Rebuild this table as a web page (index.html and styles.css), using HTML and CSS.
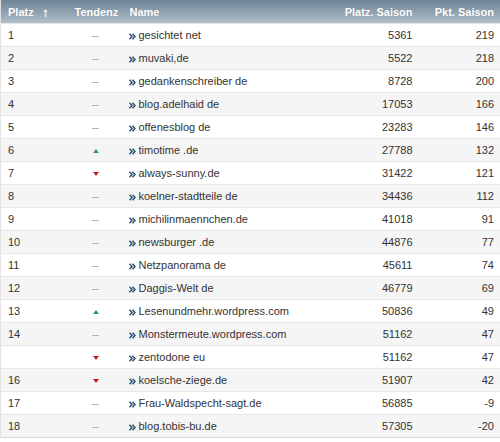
FILE: index.html
```html
<!DOCTYPE html>
<html>
<head>
<meta charset="utf-8">
<link rel="stylesheet" href="styles.css">
</head>
<body>
<table class="rank">
<colgroup><col class="c1"><col class="c2"><col class="c3"><col class="c4"><col class="c5"></colgroup>
<thead>
<tr><th class="l">Platz <svg class="sort" width="5" height="8" viewBox="0 0 5 8"><path d="M2.5 0 L5 3 L3.3 3 L3.3 8 L1.7 8 L1.7 3 L0 3 Z" fill="#dfe6ea"/></svg></th><th class="c">Tendenz</th><th class="l">Name</th><th class="r">Platz. Saison</th><th class="r">Pkt. Saison</th></tr>
</thead>
<tbody id="rows"></tbody>
</table>
<script src="app.js"></script>
</body>
</html>
```
FILE: styles.css
```css
html, body { margin: 0; padding: 0; background: #fff; }
body { font-family: "Liberation Sans", Arial, sans-serif; font-size: 11px; color: #333; }
.rank { width: 500px; border-collapse: collapse; table-layout: fixed; border-left: 1px solid #e2e2e2; border-right: 1px solid #e2e2e2; border-bottom: 1px solid #dcdcdc; }
.c1 { width: 68px; } .c2 { width: 54px; } .c3 { width: 200px; } .c4 { width: 96px; } .c5 { width: 82px; }
.rank th { height: 23px; padding: 0 6px; background: linear-gradient(#6e8394, #b0bfca); color: #fff; font-weight: bold; font-size: 11px; text-shadow: 0 0 1px rgba(60,80,95,.3); }
.rank th.l { text-align: left; padding-left: 7px; }
.rank th.c { text-align: center; }
.rank th.r { text-align: right; }
.sort { margin-left: 6px; vertical-align: -1px; }
.rank td { height: 22px; padding: 0 6px; border-top: 1px solid #e6e6e6; white-space: nowrap; }
.rank tbody tr:nth-child(even) td { background: #f5f5f5; }
.rank td.pos { padding-left: 7px; }
.rank td.t { text-align: center; }
.rank td.num { text-align: right; }
.dash { display: inline-block; width: 7px; height: 1px; background: #b5b5b5; vertical-align: middle; }
.up { display: inline-block; width: 0; height: 0; border-left: 3.5px solid transparent; border-right: 3.5px solid transparent; border-bottom: 4px solid #2f9a6a; vertical-align: middle; }
.down { display: inline-block; width: 0; height: 0; border-left: 3.5px solid transparent; border-right: 3.5px solid transparent; border-top: 4px solid #c21b22; vertical-align: middle; }
.go { margin-right: 3px; vertical-align: -1px; }
```
FILE: app.js
```js
var data = [
["1","-","gesichtet net","5361","219"],
["2","-","muvaki,de","5522","218"],
["3","-","gedankenschreiber de","8728","200"],
["4","-","blog.adelhaid de","17053","166"],
["5","-","offenesblog de","23283","146"],
["6","u","timotime .de","27788","132"],
["7","d","always-sunny.de","31422","121"],
["8","-","koelner-stadtteile de","34436","112"],
["9","-","michilinmaennchen.de","41018","91"],
["10","-","newsburger .de","44876","77"],
["11","-","Netzpanorama de","45611","74"],
["12","-","Daggis-Welt de","46779","69"],
["13","u","Lesenundmehr.wordpress.com","50836","49"],
["14","-","Monstermeute.wordpress.com","51162","47"],
["","d","zentodone eu","51162","47"],
["16","d","koelsche-ziege.de","51907","42"],
["17","-","Frau-Waldspecht-sagt.de","56885","-9"],
["18","-","blog.tobis-bu.de","57305","-20"]
];
var icon = '<svg class="go" width="7" height="7" viewBox="0 0 7 7"><path d="M0.5 0.8 L3 3.5 L0.5 6.2 M3.5 0.8 L6 3.5 L3.5 6.2" fill="none" stroke="#2b4f74" stroke-width="1.5"/></svg>';
var html = "";
data.forEach(function (r) {
  var t = r[1] === "u" ? '<span class="up"></span>' : r[1] === "d" ? '<span class="down"></span>' : '<span class="dash"></span>';
  html += '<tr><td class="pos">' + r[0] + '</td><td class="t">' + t + '</td><td>' + icon + r[2] + '</td><td class="num">' + r[3] + '</td><td class="num">' + r[4] + '</td></tr>';
});
document.getElementById("rows").innerHTML = html;
```
